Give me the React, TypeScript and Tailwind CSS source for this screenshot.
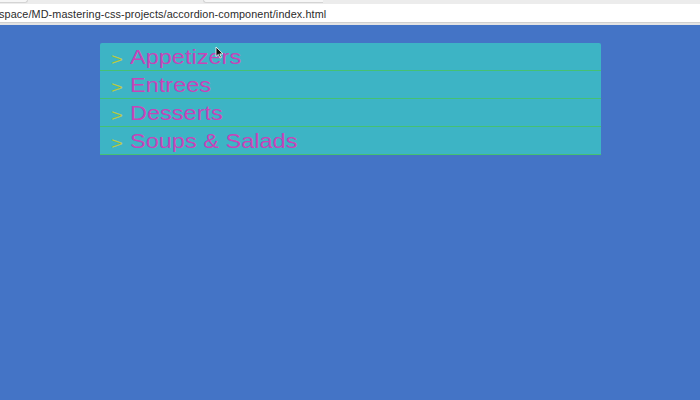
import { useState } from 'react';

const SECTIONS = ['Appetizers', 'Entrees', 'Desserts', 'Soups & Salads'];

export default function App() {
  const [open, setOpen] = useState<number | null>(null);

  return (
    <div className="w-[700px] h-[400px] flex flex-col bg-[#4474c6] overflow-hidden" style={{ fontFamily: '"Liberation Sans", Arial, sans-serif' }}>
      {/* Browser chrome (cut off) */}
      <div className="h-[4px] bg-[#ececec] flex">
        <div className="w-[28px] h-[3px] bg-[#f6f6f6] border-b border-r border-[#d4d4d4] rounded-br-[3px]" />
        <div className="w-[175px]" />
        <div className="w-[120px] h-[3px] bg-[#f6f6f6] border-b border-l border-[#d4d4d4] rounded-bl-[3px]" />
      </div>
      <div className="h-[18px] bg-white flex items-center pt-[2px]">
        <span className="text-[10.8px] text-[#2b2b2b] leading-none tracking-[0.12px] -ml-[1px]">
          space/MD-mastering-css-projects/accordion-component/index.html
        </span>
      </div>
      <div className="h-[3px] bg-[#e3e3e3] border-t border-[#d0d0d0]" />

      {/* Page */}
      <main className="relative flex-1 pt-[18px]">
        <div className="ml-[100px] w-[501px] flex flex-col rounded-t-[2px] overflow-hidden">
          {SECTIONS.map((name, i) => (
            <button
              key={name}
              onClick={() => setOpen(open === i ? null : i)}
              className="h-[28px] bg-[#3db4c5] border-b-[1.5px] border-[#45c172] flex items-center text-left"
            >
              <span className="w-[19px] ml-[11px] mt-[5px] text-[17px] leading-none text-[#b9c93d]">
                <span className="inline-block scale-x-[1.2] origin-left">&gt;</span>
              </span>
              <span className="mt-[1px] text-[20.3px] leading-none text-[#c744b9] scale-x-[1.16] origin-left whitespace-nowrap">
                {name}
              </span>
            </button>
          ))}
        </div>

        {/* Mouse cursor */}
        <svg className="absolute left-[215px] top-[21px]" width="9" height="13" viewBox="0 0 9 13">
          <path d="M1 1 L1 10.5 L3.3 8.4 L5 12 L6.4 11.4 L4.8 7.9 L8 7.9 Z" fill="#111" stroke="#fff" strokeWidth="0.8" />
        </svg>
      </main>
    </div>
  );
}
